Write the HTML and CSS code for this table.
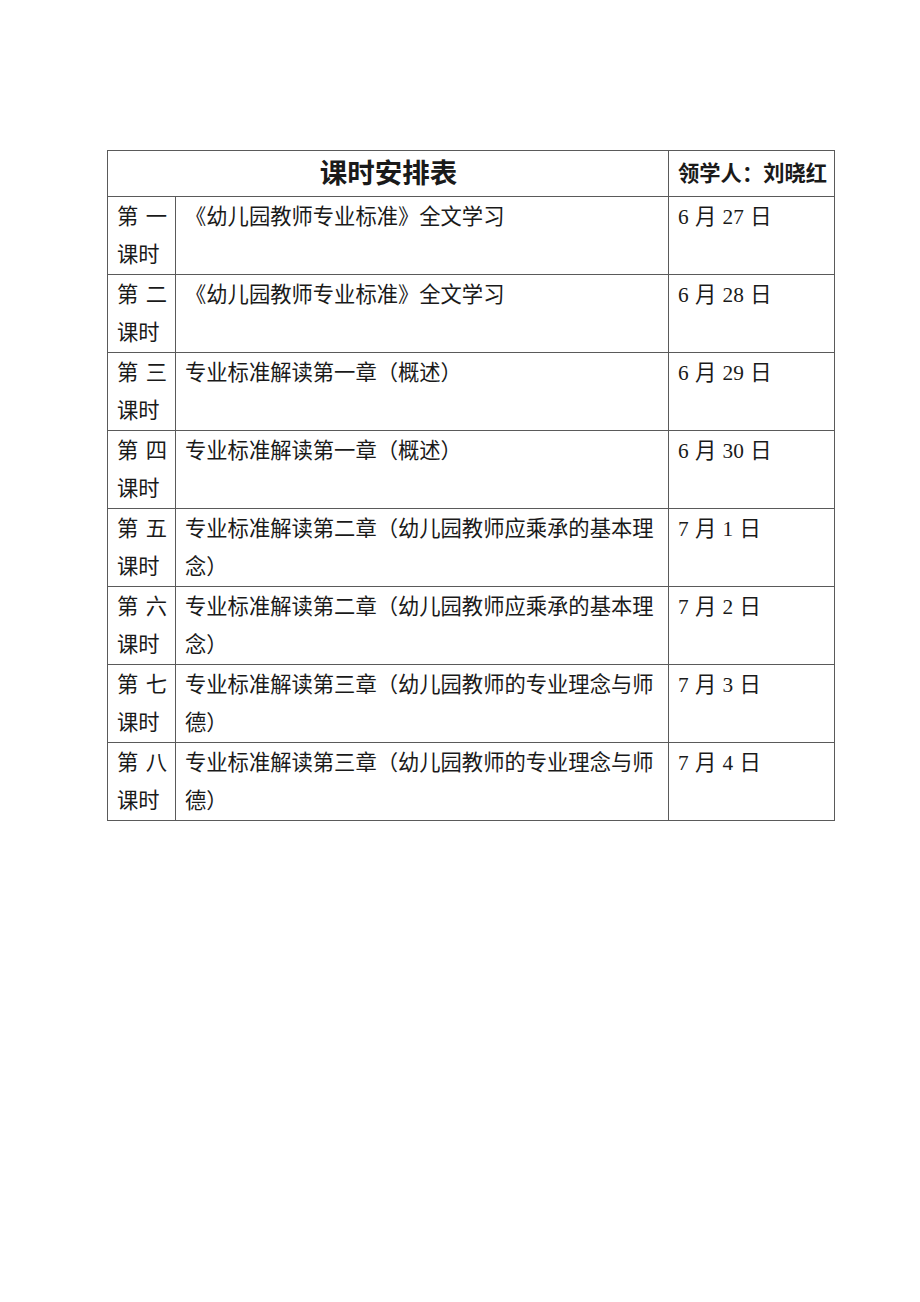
FILE: index.html
```html
<!DOCTYPE html>
<html lang="zh-CN">
<head>
<meta charset="utf-8">
<title>课时安排表</title>
<link rel="stylesheet" href="styles.css">
</head>
<body>
<div class="page">
<table class="schedule">
  <colgroup>
    <col class="c1"><col class="c2"><col class="c3">
  </colgroup>
  <tr class="head">
    <td colspan="2" class="title">课时安排表</td>
    <td class="leader">领学人：刘晓红</td>
  </tr>
  <tr><td class="num">第一课时</td><td>《幼儿园教师专业标准》全文学习</td><td class="date">6 月 27 日</td></tr>
  <tr><td class="num">第二课时</td><td>《幼儿园教师专业标准》全文学习</td><td class="date">6 月 28 日</td></tr>
  <tr><td class="num">第三课时</td><td>专业标准解读第一章（概述）</td><td class="date">6 月 29 日</td></tr>
  <tr><td class="num">第四课时</td><td>专业标准解读第一章（概述）</td><td class="date">6 月 30 日</td></tr>
  <tr><td class="num">第五课时</td><td>专业标准解读第二章（幼儿园教师应乘承的基本理念）</td><td class="date">7 月 1 日</td></tr>
  <tr><td class="num">第六课时</td><td>专业标准解读第二章（幼儿园教师应乘承的基本理念）</td><td class="date">7 月 2 日</td></tr>
  <tr><td class="num">第七课时</td><td>专业标准解读第三章（幼儿园教师的专业理念与师德）</td><td class="date">7 月 3 日</td></tr>
  <tr><td class="num">第八课时</td><td>专业标准解读第三章（幼儿园教师的专业理念与师德）</td><td class="date">7 月 4 日</td></tr>
</table>
</div>
</body>
</html>
```

FILE: styles.css
```css
html, body {
  margin: 0;
  padding: 0;
  background: #ffffff;
}
.page {
  padding: 150px 0 0 107px;
}
.schedule {
  border-collapse: collapse;
  table-layout: fixed;
  width: 727px;
  font-family: "Liberation Serif", "Noto Sans CJK SC", serif;
  font-size: 21.3px;
  color: #1a1a1a;
}
.c1 { width: 68px; }
.c2 { width: 493px; }
.c3 { width: 166px; }
.schedule td {
  border: 1px solid #5a5a5a;
  vertical-align: top;
  padding: 1px 8px 0 9px;
  line-height: 38px;
}
.schedule tr.head td {
  height: 45px;
  padding-top: 0;
  vertical-align: middle;
  line-height: 30px;
  font-weight: bold;
}
.title {
  text-align: center;
  font-size: 27.5px;
}
.leader {
  font-size: 21.3px;
  white-space: nowrap;
}
.num {
  text-align: justify;
}
.date {
  word-spacing: 1px;
}
```
